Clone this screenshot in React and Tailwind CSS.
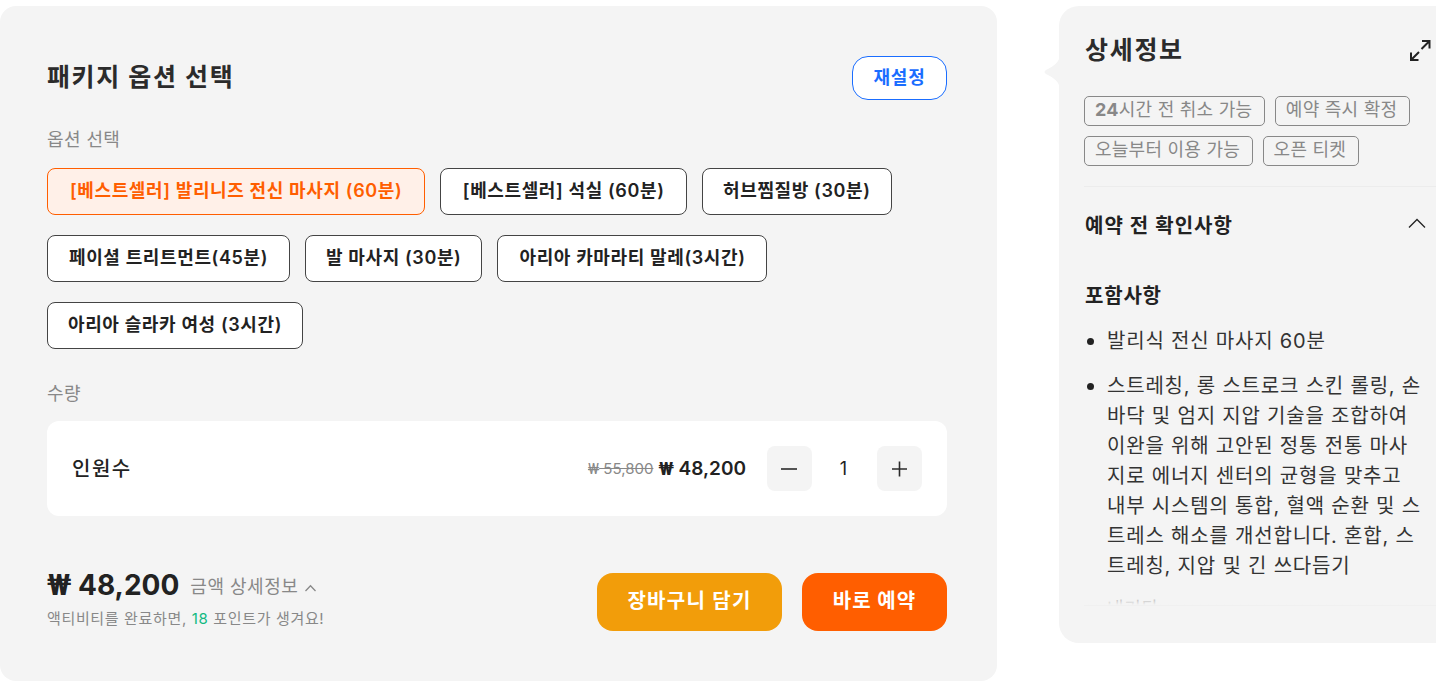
import React from "react";

const F = { fontFamily: '"Inter","Noto Sans CJK KR",sans-serif' };
const WON = { fontFamily: '"Roboto",sans-serif' };

function Chip({ children, active, className }) {
  return (
    <button
      className={
        (active
          ? "h-[47px] pb-[2px] rounded-lg border border-[#ff5e00] bg-[#fff0e8] text-[#ff5e00] text-[18px] tracking-[0.62px] font-semibold "
          : "h-[47px] pb-[2px] rounded-lg border border-[#444444] bg-white text-[#222222] text-[18px] tracking-[0.62px] font-semibold ") + className
      }
    >
      {children}
    </button>
  );
}

function Tag({ children }) {
  return (
    <span className="h-[30px] pl-[10px] pr-[11.5px] pb-[2px] flex items-center rounded-[5px] border border-[#888888] text-[#888888] text-[18px] tracking-[0.25px] leading-none">
      {children}
    </span>
  );
}

function StepBtn({ children }) {
  return (
    <button className="w-[45px] h-[45px] rounded-lg bg-[#f4f4f4] flex items-center justify-center">
      <svg width="18" height="18" viewBox="0 0 18 18" fill="none" stroke="#2b2b2b" strokeWidth="1.6">
        {children}
      </svg>
    </button>
  );
}

function Bullet({ children, className }) {
  return (
    <li className={"flex " + (className || "")}>
      <span className="mt-[12px] ml-[3px] mr-[13px] w-[7px] h-[7px] rounded-full bg-[#222222] shrink-0" />
      <span>{children}</span>
    </li>
  );
}

export default function App() {
  return (
    <div style={F} className="w-[1436px] h-[691px] overflow-hidden bg-white flex items-start pt-[6px] text-[#222222]">
      {/* Left panel */}
      <section className="w-[997px] h-[675px] shrink-0 bg-[#f4f4f4] rounded-2xl pl-[47px] pr-[50px] pt-[50px]">
        <header className="flex items-center justify-between h-[44px]">
          <h2 className="text-[25px] tracking-[1.6px] font-bold text-[#2b2b2b]">패키지 옵션 선택</h2>
          <button className="w-[95px] h-[44px] pb-[2px] rounded-2xl border border-[#1a6dff] bg-white text-[#1a6dff] text-[18px] tracking-[0.8px] font-bold">
            재설정
          </button>
        </header>

        <div className="mt-[27px] text-[18px] tracking-[0.4px] leading-[26px] text-[#888888]">옵션 선택</div>
        <div className="mt-[15px] flex flex-wrap gap-x-[15px] gap-y-[20px]">
          <Chip active className="px-[22px]">[베스트셀러] 발리니즈 전신 마사지 (60분)</Chip>
          <Chip className="px-[21.5px]">[베스트셀러] 석실 (60분)</Chip>
          <Chip className="px-[20px]">허브찜질방 (30분)</Chip>
          <Chip className="px-[21px]">페이셜 트리트먼트(45분)</Chip>
          <Chip className="px-[20px]">발 마사지 (30분)</Chip>
          <Chip className="px-[21px]">아리아 카마라티 말레(3시간)</Chip>
          <Chip className="px-[20px]">아리아 슬라카 여성 (3시간)</Chip>
        </div>

        <div className="mt-[32px] text-[18px] tracking-[0.4px] leading-[26px] text-[#888888]">수량</div>
        <div className="mt-[14px] h-[95px] rounded-xl bg-white flex items-center justify-between px-[25px]">
          <span className="text-[20px] tracking-[1.5px] font-medium pt-[1px]">인원수</span>
          <div className="flex items-center">
            <span className="text-[15px] text-[#888888] line-through pt-[1px]"><span style={WON}>₩</span> 55,800</span>
            <span className="ml-[5px] text-[19px] font-semibold pt-[1px]"><span style={WON} className="font-bold">₩</span> 48,200</span>
            <div className="ml-[21px] flex items-center">
              <StepBtn><path d="M0 9h16" /></StepBtn>
              <span className="w-[65px] text-center text-[18px] pr-[2px]">1</span>
              <StepBtn><path d="M1 9h15M8.5 1.5v15" /></StepBtn>
            </div>
          </div>
        </div>

        <footer className="mt-[57px] flex items-center justify-between h-[58px]">
          <div className="mt-[-7px]">
            <div className="flex items-center h-[34px]">
              <span className="text-[28px] font-bold leading-none"><span style={WON} className="text-[30px]">₩</span> 48,200</span>
              <span className="ml-[11px] text-[18px] tracking-[0.5px] text-[#888888] pt-[2px]">금액 상세정보</span>
              <svg className="ml-[6px] mt-[5px]" width="13" height="8" viewBox="0 0 13 8" fill="none" stroke="#888888" strokeWidth="1.3">
                <path d="M1.5 7L6.5 1.8L11.5 7" />
              </svg>
            </div>
            <p className="mt-[7px] text-[15px] tracking-[0.65px] leading-[20px] text-[#888888]">
              액티비티를 완료하면, <span className="text-[#10b981]">18</span> 포인트가 생겨요!
            </p>
          </div>
          <div className="flex gap-[20px]">
            <button className="w-[185px] h-[58px] pb-[3px] rounded-2xl bg-[#f29d0a] text-white text-[20px] tracking-[1.3px] font-bold">장바구니 담기</button>
            <button className="w-[145px] h-[58px] pb-[3px] rounded-2xl bg-[#ff5e00] text-white text-[20px] tracking-[1px] font-bold">바로 예약</button>
          </div>
        </footer>
      </section>

      {/* Right panel */}
      <aside className="relative ml-[62px] w-[400px] h-[637px] shrink-0 bg-[#f4f4f4] rounded-l-[20px] pl-[25px] pr-[28px]">
        <svg className="absolute left-[-15px] top-[48px]" width="16" height="36" viewBox="0 0 16 36" fill="#f4f4f4">
          <path d="M16 0C16 8 10 12 2 16C0 17 0 19 2 20C10 24 16 28 16 36Z" />
        </svg>
        <div className="flex items-center justify-between h-[86px]">
          <h3 className="ml-[1px] mt-[3px] text-[25px] tracking-[1.7px] font-semibold text-[#2b2b2b]">상세정보</h3>
          <svg className="mt-[2px]" width="22" height="22" viewBox="0 0 22 22" fill="none" stroke="#222222" strokeWidth="2">
            <path d="M13 2h7.5v7.5M20.5 2L12.5 10M9.5 21H2v-7.5M2 21l8-8" />
          </svg>
        </div>
        <div className="mt-[4px] flex flex-wrap gap-x-[10px] gap-y-[10px]">
          <Tag><b className="font-bold">24</b>시간 전 취소 가능</Tag>
          <Tag>예약 즉시 확정</Tag>
          <Tag>오늘부터 이용 가능</Tag>
          <Tag>오픈 티켓</Tag>
        </div>
        <div className="mt-[20px] h-px bg-[#ececec] mr-[-28px]" />
        <div className="flex items-center justify-between h-[77px] pt-[1px]">
          <span className="ml-[1px] text-[20px] tracking-[1px] font-semibold">예약 전 확인사항</span>
          <svg className="mr-[5px] mb-[7px]" width="18" height="10" viewBox="0 0 18 10" fill="none" stroke="#222222" strokeWidth="1.3">
            <path d="M1 9.5L9 1.5L17 9.5" />
          </svg>
        </div>
        <div className="relative h-[341px] overflow-hidden pt-[18px]">
          <h4 className="ml-[1px] text-[20px] tracking-[0.8px] leading-[28px] font-semibold">포함사항</h4>
          <ul className="mt-[16px] text-[20px] tracking-[0.8px] leading-[30px] text-[#333333] w-[338px]">
            <Bullet>발리식 전신 마사지 60분</Bullet>
            <Bullet className="mt-[15px]">스트레칭, 롱 스트로크 스킨 롤링, 손바닥 및 엄지 지압 기술을 조합하여 이완을 위해 고안된 정통 전통 마사지로 에너지 센터의 균형을 맞추고 내부 시스템의 통합, 혈액 순환 및 스트레스 해소를 개선합니다. 혼합, 스트레칭, 지압 및 긴 쓰다듬기</Bullet>
            <li className="mt-[13px] pl-[23px] text-[18px] text-[#777777]">내기타</li>
          </ul>
          <div className="absolute inset-x-0 bottom-0 h-[14px] bg-gradient-to-b from-transparent to-[#f4f4f4]" />
        </div>
        <div className="h-px bg-[#f0f0f0] mr-[-28px]" />
      </aside>
    </div>
  );
}
